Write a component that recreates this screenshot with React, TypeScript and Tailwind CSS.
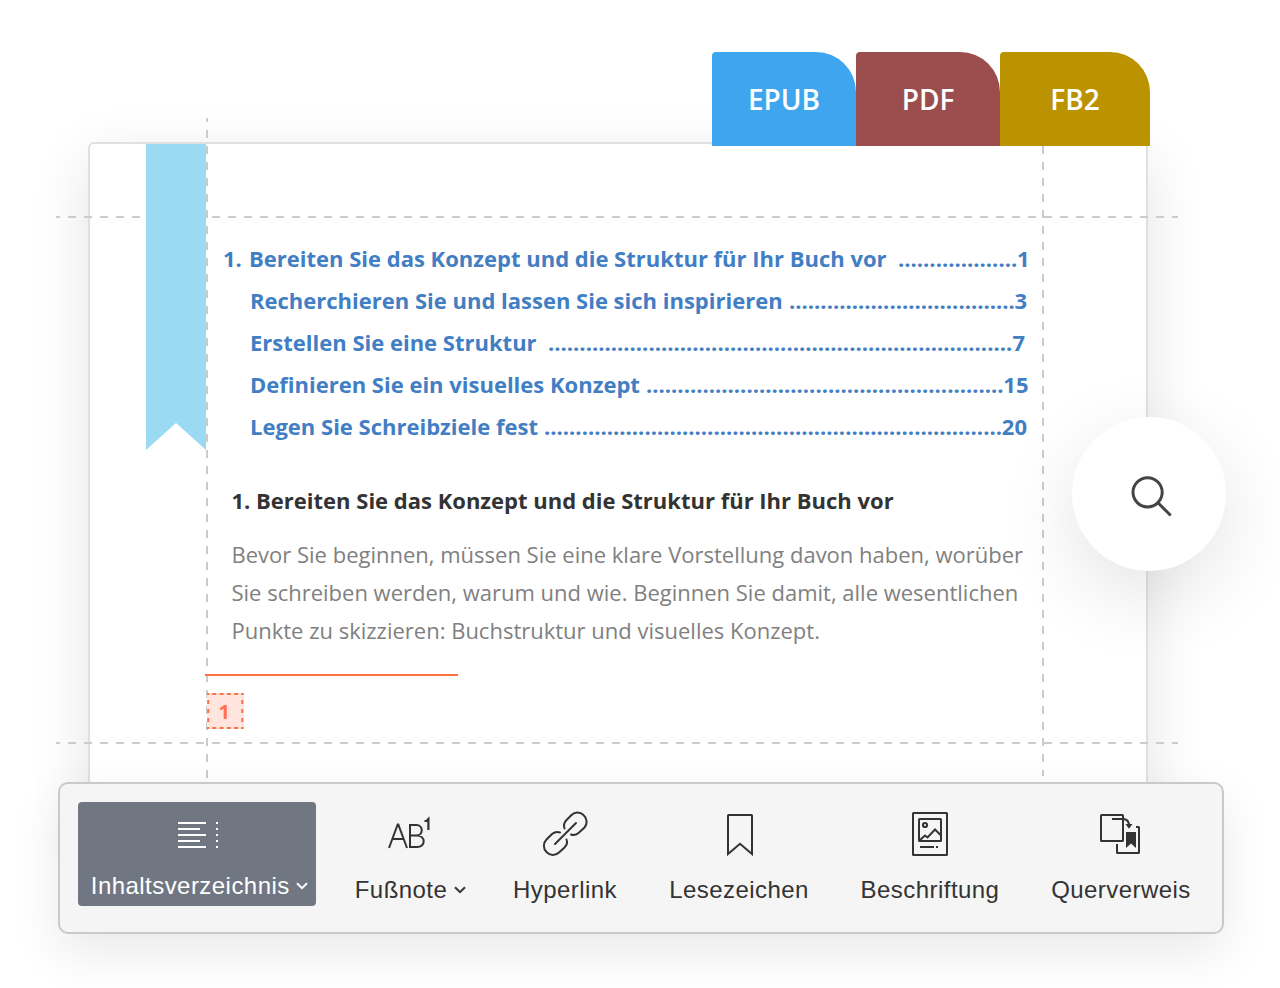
import React from "react";

const toc = [
  { t: "Bereiten Sie das Konzept und die Struktur für Ihr Buch vor", d: 19, p: "1", start: "pl-[12px]", tw: "w-[637px]", end: "w-[780.5px]", row: "-ml-px" },
  { t: "Recherchieren Sie und lassen Sie sich inspirieren", d: 36, p: "3", start: "pl-[6px]", tw: "w-[533px]", end: "w-[777px]", row: "" },
  { t: "Erstellen Sie eine Struktur", d: 74, p: "7", start: "pl-[11px]", tw: "w-[287px]", end: "w-[775px]", row: "" },
  { t: "Definieren Sie ein visuelles Konzept", d: 57, p: "15", start: "pl-[6px]", tw: "w-[390px]", end: "w-[778.5px]", row: "" },
  { t: "Legen Sie Schreibziele fest", d: 73, p: "20", start: "pl-[6px]", tw: "w-[288px]", end: "w-[777px]", row: "" },
];

const Chevron = () => (
  <svg width="12" height="8" viewBox="0 0 12 8" fill="none" stroke="currentColor" strokeWidth="2">
    <path d="M1 1.2 6 6.2 11 1.2" />
  </svg>
);

const FootnoteIcon = () => (
  <svg className="mr-[4px]" width="44" height="44" viewBox="386 812 44 44" fill="none" stroke="currentColor" strokeWidth="2">
    <path d="M388 848 396.700 824.500H397.300L406 848M391.500 839H402.500M409 825H415.500C422.500 825 422.500 835.500 415.500 835.500H409M415.500 835.500C425 835.500 425 847 416 847H409V824" />
    <path strokeWidth="2.200" d="M423.500 821H425.500L427.400 819V830" />
  </svg>
);

const LinkIcon = () => (
  <svg width="48" height="48" viewBox="541 810 48 48" fill="none" stroke="currentColor" strokeWidth="2" strokeLinecap="round">
    <path d="M555 844 576 823" />
    <path d="M564.500 828.500C563.500 825.500 564 822.500 566.500 820L571.500 815C575 811.500 580 811.500 583.500 815C587.500 818.500 587.500 824 584.500 827.500L578.500 833C576 835 573.500 835.500 571 834.500" />
    <path d="M560 832.500C557 831.500 554.500 832 552 834L546.500 839.500C543 843 543 848.500 546.500 852C550 855.800 555.500 855.800 559 852.500L564.500 847.500C567 845 567.500 842 566.500 839.500" />
  </svg>
);

const BookmarkIcon = () => (
  <svg className="ml-px" width="30" height="44" viewBox="725 812 30 44" fill="none" stroke="currentColor" strokeWidth="2">
    <path d="M728 854V815.500Q728 815 728.500 815H751.500Q752 815 752 815.500V854L740 843.700Z" />
  </svg>
);

const CaptionIcon = () => (
  <svg width="38" height="46" viewBox="911 811 38 46" fill="none" stroke="currentColor" strokeWidth="2">
    <rect x="913" y="813" width="34" height="42" rx="0.600" />
    <rect x="919" y="819" width="22" height="22" rx="0.600" />
    <circle cx="925" cy="825" r="2.100" />
    <path d="M920 840 925 835.500 927.500 837.500 935 829.500 941 835.500M920 847H934M936 847H938" />
  </svg>
);

const CrossRefIcon = () => (
  <svg className="mr-[2px]" width="42" height="42" viewBox="1099 815 42 42" fill="none" stroke="currentColor" strokeWidth="2">
    <rect x="1101" y="817" width="22" height="26" rx="0.600" />
    <path d="M1112 821H1123Q1129 821 1129 828M1136 829H1138.500Q1139 829 1139 829.500V854.500Q1139 855 1138.500 855H1117.500Q1117 855 1117 854.500V846" />
    <path fill="currentColor" stroke="none" d="M1125.500 826H1132.500L1129 830.700ZM1126 834H1136V850L1131 845.500 1126 850Z" />
  </svg>
);

function Tool({ box, label, icon, chevron }: { box: string; label: string; icon: React.ReactNode; chevron?: boolean }) {
  return (
    <button className={"flex h-full flex-col items-center text-[#333] " + box}>
      <span className="mt-[20px] flex h-[60px] items-center">{icon}</span>
      <span className="mt-[11px] flex items-center gap-[7px] whitespace-nowrap leading-[30px]">{label}{chevron && <Chevron />}</span>
    </button>
  );
}

export default function App() {
  return (
    <div className="relative flex h-[988px] w-[1280px] flex-col overflow-hidden bg-white font-['Open_Sans',sans-serif]">
      <nav className="relative z-20 mt-[52px] ml-[712px] flex h-[94px] shrink-0 text-[28px] font-semibold leading-[94px] text-white">
        <div className="w-[144px] rounded-tl-[4px] rounded-tr-[40px] bg-[#40a5ef] text-center">EPUB</div>
        <div className="w-[144px] rounded-tl-[4px] rounded-tr-[40px] bg-[#9b4e4d] text-center">PDF</div>
        <div className="w-[150px] rounded-tl-[4px] rounded-tr-[40px] bg-[#bb9300] text-center">FB2</div>
      </nav>

      <main className="-mt-1 ml-[88px] flex h-[680px] w-[1060px] shrink-0 rounded-[6px] border-2 border-[#e0e0e0] bg-white shadow-[0_18px_60px_rgba(0,0,0,0.11)]">
        <svg className="relative z-10 ml-[56px] shrink-0" width="60" height="306"><path fill="#9bdaf3" d="M0 0H60V306L30 279 0 306Z" /></svg>
        <div className="flex flex-col pt-[92.500px]">
          <ol className="ml-[18px] flex flex-col text-[22px] font-bold text-[#427ec3]">
            {toc.map((r, i) => (
              <li key={r.p} className={"flex h-[42px] whitespace-pre leading-[42px] " + r.row}>
                <span className="w-[26px] shrink-0">{i === 0 ? "1." : ""}</span>
                <span className={"flex shrink-0 " + r.end}>
                  <span className={"shrink-0 " + r.tw}>{r.t}</span>
                  <span className={"min-w-0 flex-1 " + r.start}>{".".repeat(r.d)}</span>
                  <span>{r.p}</span>
                </span>
              </li>
            ))}
          </ol>
          <h1 className="mt-[32.500px] ml-[25.500px] whitespace-nowrap text-[22px] font-bold leading-[42px] text-[#333]">1. Bereiten Sie das Konzept und die Struktur für Ihr Buch vor</h1>
          <p className="mt-[14px] ml-[25.500px] whitespace-nowrap text-[22px] leading-[38px] text-[#808080]">
            Bevor Sie beginnen, müssen Sie eine klare Vorstellung davon haben, worüber<br />
            Sie schreiben werden, warum und wie. Beginnen Sie damit, alle wesentlichen<br />
            Punkte zu skizzieren: Buchstruktur und visuelles Konzept.
          </p>
          <div className="relative z-10 mt-[25px] -ml-px h-[2px] w-[253px] bg-[#ff7043]" />
          <div className="relative z-10 mt-[17px] ml-px flex h-[36px] w-[36.500px] items-center justify-center bg-[#ffe5dd] text-[20px] font-bold text-[#ff7043]">
            <svg className="absolute inset-0" width="36.5" height="36" fill="none" stroke="#ff7043" strokeWidth="2">
              <path d="M0 1H36.500M0 35H36.500" strokeDasharray="4 3.300" strokeDashoffset="2" />
              <path d="M1.200 0V36M35.300 0V36" strokeDasharray="4 5" strokeDashoffset="2" />
            </svg>
            <span className="-ml-[2px] mt-[2px]">1</span>
          </div>
        </div>
      </main>

      <svg className="pointer-events-none absolute inset-0" width="1280" height="988" fill="none" stroke="#ccc" strokeWidth="2" strokeDasharray="8 8" strokeDashoffset="4">
        <path d="M56 217H1178M56 743H1178M207 118V782M1043 118V776" />
      </svg>

      <div className="absolute top-[416.500px] left-[1072px] z-10 flex h-[154px] w-[154px] items-center justify-center rounded-full bg-white shadow-[0_24px_80px_rgba(0,0,0,0.11)]">
        <svg width="44" height="44" viewBox="1127 472 44 44" fill="none" stroke="#444" strokeWidth="3" className="overflow-visible">
          <circle cx="1147.600" cy="492.300" r="14.600" /><path d="M1158 502.800 1170.700 515.500" />
        </svg>
      </div>

      <footer className="relative z-20 -mt-[40px] ml-[58px] flex h-[152px] w-[1166px] shrink-0 rounded-[10px] border-2 border-[#c9c9c9] bg-[#f5f5f5] font-['Liberation_Sans',sans-serif] text-[24px] tracking-[0.45px] shadow-[0_18px_50px_rgba(0,0,0,0.09)]">
        <button className="mt-[18px] ml-[18px] flex h-[104px] w-[238px] shrink-0 flex-col items-center rounded-[4px] bg-[#717782] text-white">
          <svg className="mt-[20px] ml-[2px]" width="40" height="26" fill="none" stroke="white" strokeWidth="2">
            <path d="M0 1H28M0 7H22M0 13H28M0 19H22M0 25H28" /><path d="M39 0V26" strokeDasharray="2 4" />
          </svg>
          <span className="mt-[23px] ml-[5px] flex items-center gap-[6.500px] whitespace-nowrap leading-[30px]">Inhaltsverzeichnis<Chevron /></span>
        </button>
        <Tool box="ml-[29px] w-[131px]" label="Fußnote" icon={<FootnoteIcon />} chevron />
        <Tool box="ml-[24px] w-[130px]" label="Hyperlink" icon={<LinkIcon />} />
        <Tool box="ml-[34px] w-[150px]" label="Lesezeichen" icon={<BookmarkIcon />} />
        <Tool box="ml-[41px] w-[150px]" label="Beschriftung" icon={<CaptionIcon />} />
        <Tool box="ml-[41px] w-[150px]" label="Querverweis" icon={<CrossRefIcon />} />
      </footer>
    </div>
  );
}
